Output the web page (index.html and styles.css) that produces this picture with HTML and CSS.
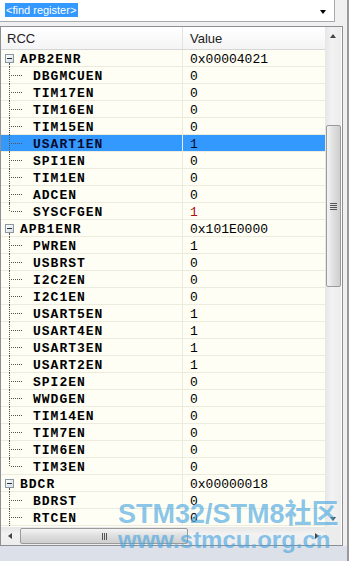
FILE: index.html
```html
<!DOCTYPE html>
<html>
<head>
<meta charset="utf-8">
<link rel="stylesheet" href="styles.css">
</head>
<body>
<div class="app">
  <div class="combo">
    <span class="combo-text">&lt;find register&gt;</span>
    <span class="combo-arrow"></span>
  </div>
  <div class="panel">
    <div class="list">
      <div class="header">
        <div class="hcell hname">RCC</div>
        <div class="hcell hvalue">Value</div>
      </div>
      <div class="rows">
        <div class="row parent"><div class="name"><span class="toggle"></span>APB2ENR</div><div class="value">0x00004021</div></div>
        <div class="row child"><div class="name">DBGMCUEN</div><div class="value">0</div></div>
        <div class="row child"><div class="name">TIM17EN</div><div class="value">0</div></div>
        <div class="row child"><div class="name">TIM16EN</div><div class="value">0</div></div>
        <div class="row child"><div class="name">TIM15EN</div><div class="value">0</div></div>
        <div class="row child selected"><div class="name">USART1EN</div><div class="value">1</div></div>
        <div class="row child"><div class="name">SPI1EN</div><div class="value">0</div></div>
        <div class="row child"><div class="name">TIM1EN</div><div class="value">0</div></div>
        <div class="row child"><div class="name">ADCEN</div><div class="value">0</div></div>
        <div class="row child last"><div class="name">SYSCFGEN</div><div class="value changed">1</div></div>
        <div class="row parent"><div class="name"><span class="toggle"></span>APB1ENR</div><div class="value">0x101E0000</div></div>
        <div class="row child"><div class="name">PWREN</div><div class="value">1</div></div>
        <div class="row child"><div class="name">USBRST</div><div class="value">0</div></div>
        <div class="row child"><div class="name">I2C2EN</div><div class="value">0</div></div>
        <div class="row child"><div class="name">I2C1EN</div><div class="value">0</div></div>
        <div class="row child"><div class="name">USART5EN</div><div class="value">1</div></div>
        <div class="row child"><div class="name">USART4EN</div><div class="value">1</div></div>
        <div class="row child"><div class="name">USART3EN</div><div class="value">1</div></div>
        <div class="row child"><div class="name">USART2EN</div><div class="value">1</div></div>
        <div class="row child"><div class="name">SPI2EN</div><div class="value">0</div></div>
        <div class="row child"><div class="name">WWDGEN</div><div class="value">0</div></div>
        <div class="row child"><div class="name">TIM14EN</div><div class="value">0</div></div>
        <div class="row child"><div class="name">TIM7EN</div><div class="value">0</div></div>
        <div class="row child"><div class="name">TIM6EN</div><div class="value">0</div></div>
        <div class="row child last"><div class="name">TIM3EN</div><div class="value">0</div></div>
        <div class="row parent"><div class="name"><span class="toggle"></span>BDCR</div><div class="value">0x00000018</div></div>
        <div class="row child"><div class="name">BDRST</div><div class="value">0</div></div>
        <div class="row child"><div class="name">RTCEN</div><div class="value">0</div></div>
      </div>
    </div>
    <div class="vscroll">
      <div class="sb-btn"><span class="tri up"></span></div>
      <div class="vtrack">
        <div class="vgap-top"></div>
        <div class="vthumb"><span class="grip-h"></span><span class="grip-h"></span><span class="grip-h"></span><span class="grip-h"></span></div>
        <div class="vgap-bottom"></div>
      </div>
      <div class="sb-btn"><span class="tri down"></span></div>
    </div>
    <div class="hscroll">
      <div class="sb-btn-h"><span class="tri left"></span></div>
      <div class="htrack">
        <div class="hthumb"><span class="grip-v"></span><span class="grip-v"></span><span class="grip-v"></span></div>
      </div>
      <div class="sb-btn-h"><span class="tri right"></span></div>
    </div>
    <div class="corner"></div>
  </div>
  <div class="footer"></div>
  <div class="watermark">
    <div class="wm1">STM32/STM8社区</div>
    <div class="wm2">www.stmcu.org.cn</div>
  </div>
</div>
</body>
</html>
```
FILE: styles.css
```css
* { box-sizing: border-box; }
html, body { margin: 0; padding: 0; }
body {
  width: 349px;
  height: 561px;
  overflow: hidden;
  background: #f0f0f0;
  font-family: "Liberation Sans", Arial, sans-serif;
}
.app {
  position: relative;
  width: 349px;
  height: 561px;
  display: flex;
  flex-direction: column;
  border-right: 2px solid #9a9a9a;
}
.combo {
  height: 22px;
  margin-right: 12px;
  margin-bottom: 4px;
  background: #fff;
  border: 1px solid #a7abb0;
  border-top: none;
  border-left: none;
  display: flex;
  align-items: center;
  justify-content: space-between;
  padding: 0 8px 0 5px;
}
.combo-text {
  background: #3399ff;
  color: #fff;
  font-size: 11px;
  line-height: 14px;
  height: 14px;
  padding: 0 2px 0 1px;
  margin-top: -1px;
}
.combo-arrow {
  width: 0;
  height: 0;
  border-left: 3px solid transparent;
  border-right: 3px solid transparent;
  border-top: 4px solid #000;
  margin-top: 2px;
}
.panel {
  height: 520px;
  width: 343px;
  border: 1px solid #8c8f94;
  display: grid;
  grid-template-columns: 324px 16px;
  grid-template-rows: 500px 18px;
  background: #fff;
}
.list {
  overflow: hidden;
  background: #fefef4;
}
.header {
  display: flex;
  height: 23px;
  border-bottom: 1px solid #d6d6d6;
  background: linear-gradient(#ffffff, #f4f4f4);
  color: #222;
  font-size: 13px;
  line-height: 22px;
}
.hcell { padding-top: 1px; }
.hname {
  width: 182px;
  padding-left: 6px;
  border-right: 1px solid #e2e2e2;
}
.hvalue { padding-left: 7px; }
.row {
  display: flex;
  height: 17px;
  border-bottom: 1px solid #ebebde;
  font-family: "Liberation Mono", "Courier New", monospace;
  font-size: 13px;
  line-height: 15px;
  color: #000;
}
.row.selected { background: #3399ff; color: #0a0a30; }
.name {
  position: relative;
  width: 182px;
  padding-top: 2px;
  font-weight: bold;
  letter-spacing: 1px;
  border-right: 1px solid #ebebde;
  white-space: nowrap;
}
.row.parent .name { padding-left: 19px; }
.row.child .name { padding-left: 32px; }
.value {
  padding-top: 2px;
  padding-left: 7px;
}
.value.changed { color: #b01010; }
.row.child .name::before {
  content: "";
  position: absolute;
  left: 8px;
  top: 0;
  bottom: -1px;
  border-left: 1px dotted #555;
}
.row.child.last .name::before { bottom: 8px; }
.row.child .name::after {
  content: "";
  position: absolute;
  left: 10px;
  top: 8px;
  width: 11px;
  border-top: 1px dotted #555;
}
.row.parent .name::before {
  content: "";
  position: absolute;
  left: 8px;
  top: 13px;
  bottom: -1px;
  border-left: 1px dotted #555;
}
.toggle {
  position: absolute;
  left: 4px;
  top: 4px;
  width: 9px;
  height: 9px;
  border: 1px solid #8a97a5;
  background: linear-gradient(135deg, #ffffff, #d8dde3);
}
.toggle::after {
  content: "";
  position: absolute;
  left: 1px;
  top: 3px;
  width: 5px;
  height: 1px;
  background: #233;
}
.vscroll {
  display: flex;
  flex-direction: column;
  background: linear-gradient(90deg, #e6e6e6, #f2f2f2 40%, #ececec);
}
.sb-btn {
  height: 17px;
  display: flex;
  align-items: center;
  justify-content: center;
}
.vtrack {
  flex: 1;
  display: flex;
  flex-direction: column;
}
.vgap-top { height: 81px; }
.vgap-bottom { flex: 1; }
.vthumb {
  height: 162px;
  margin: 0 0 0 1px;
  border: 1px solid #9a9a9a;
  border-radius: 2px;
  background: linear-gradient(90deg, #f4f4f4, #dedede 50%, #cfcfcf);
  display: flex;
  flex-direction: column;
  align-items: center;
  justify-content: center;
  gap: 1px;
}
.grip-h {
  width: 7px;
  height: 1px;
  background: #555;
}
.hscroll {
  display: flex;
  align-items: stretch;
  background: linear-gradient(#e6e6e6, #f2f2f2 40%, #ececec);
}
.sb-btn-h {
  width: 17px;
  display: flex;
  align-items: center;
  justify-content: center;
}
.htrack {
  flex: 1;
  display: flex;
  padding: 1px 0;
}
.hthumb {
  width: 168px;
  margin-left: 2px;
  border: 1px solid #9a9a9a;
  border-radius: 2px;
  background: linear-gradient(#f4f4f4, #dedede 50%, #cfcfcf);
  display: flex;
  align-items: center;
  justify-content: center;
  gap: 1px;
}
.grip-v {
  width: 1px;
  height: 7px;
  background: #555;
}
.corner { background: #ececec; }
.tri { width: 0; height: 0; display: block; }
.tri.up {
  border-left: 3px solid transparent;
  border-right: 3px solid transparent;
  border-bottom: 4px solid #444;
}
.tri.down {
  border-left: 3px solid transparent;
  border-right: 3px solid transparent;
  border-top: 4px solid #444;
}
.tri.left {
  border-top: 3px solid transparent;
  border-bottom: 3px solid transparent;
  border-right: 4px solid #444;
}
.tri.right {
  border-top: 3px solid transparent;
  border-bottom: 3px solid transparent;
  border-left: 4px solid #444;
}
.footer {
  flex: 1;
  background: #dce1e9;
}
.watermark {
  position: absolute;
  left: 118px;
  top: 500px;
  font-family: "Liberation Sans", "Noto Sans CJK SC", sans-serif;
  font-weight: bold;
  color: rgba(70, 165, 225, 0.65);
  white-space: nowrap;
  pointer-events: none;
}
.wm1 { font-size: 27px; line-height: 28px; font-family: "Liberation Sans", "Noto Sans CJK SC", sans-serif; }
.wm2 { font-size: 24px; line-height: 24px; }
```
